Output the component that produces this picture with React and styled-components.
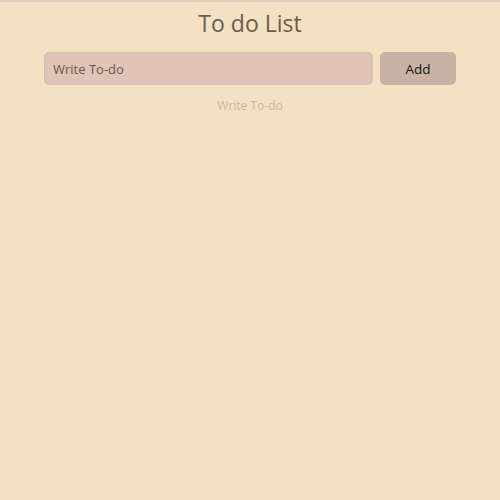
import React, { useState } from "react";
import styled, { createGlobalStyle } from "styled-components";

const Global = createGlobalStyle`
  html, body {
    margin: 0;
    padding: 0;
    background: #f4e1c3;
    font-family: "Open Sans", "Liberation Sans", sans-serif;
  }
`;

export default function App() {
  const [todo, setTodo] = useState("");
  const [todos, setTodos] = useState([]);

  function addTodo() {
    if (!todo.trim()) return;
    setTodos([...todos, todo]);
    setTodo("");
  }

  return (
    <React.Fragment>
      <Global />
      <Page>
        <Title>To do List</Title>
        <Form>
          <Input
            placeholder="Write To-do"
            value={todo}
            onChange={(e) => setTodo(e.target.value)}
          />
          <AddButton onClick={addTodo}>Add</AddButton>
        </Form>
        {todos.length === 0 ? (
          <Empty>Write To-do</Empty>
        ) : (
          todos.map((item, index) => <Empty key={index}>{item}</Empty>)
        )}
      </Page>
    </React.Fragment>
  );
}

const Page = styled.div`
  height: 500px;
  box-sizing: border-box;
  border-top: 2px solid #ddd0bc;
  display: flex;
  flex-direction: column;
  align-items: center;
`;

const Title = styled.h1`
  margin: 6px 0 0;
  font-size: 23px;
  font-weight: 400;
  line-height: 30px;
  color: #6d5c4a;
`;

const Form = styled.div`
  display: flex;
  gap: 7px;
  margin-top: 14px;
`;

const Input = styled.input`
  width: 329px;
  height: 33px;
  box-sizing: border-box;
  border: 1px solid #d9c0ac;
  border-radius: 5px;
  background: #e0c4b6;
  padding: 0 8px;
  font-family: inherit;
  font-size: 13px;
  color: #6a5a4c;
  outline: none;
  &::placeholder {
    color: #67594f;
  }
`;

const AddButton = styled.button`
  width: 76px;
  height: 33px;
  border: none;
  border-radius: 5px;
  background: #c9b1a4;
  font-family: inherit;
  font-size: 13.5px;
  color: #1c1612;
  cursor: pointer;
`;

const Empty = styled.div`
  margin-top: 12px;
  font-size: 12px;
  color: #c7b7a3;
`;
